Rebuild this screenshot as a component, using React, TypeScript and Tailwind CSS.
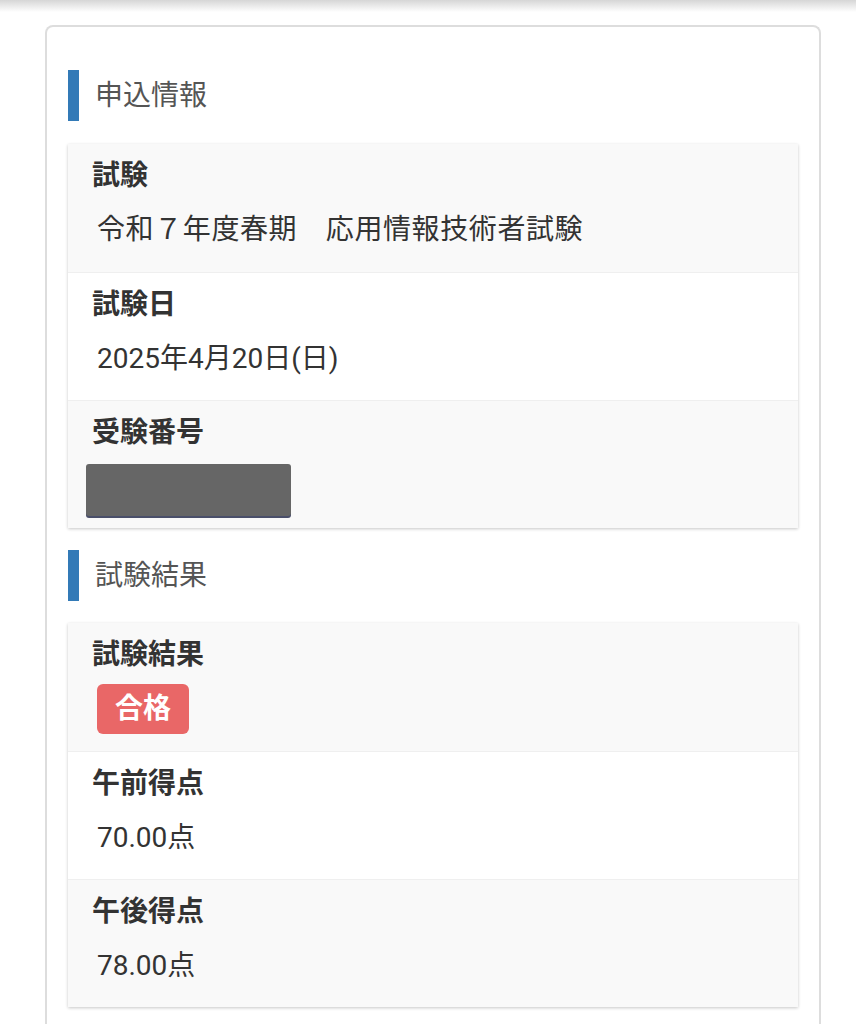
import type { ReactNode } from 'react';

interface FieldRow {
  label: string;
  value: ReactNode;
}

const applicationRows: FieldRow[] = [
  { label: '試験', value: <p className="pl-[5px] tracking-[0.6px]">令和７年度春期　応用情報技術者試験</p> },
  { label: '試験日', value: <p className="pl-[5px]">2025年4月20日(日)</p> },
  {
    label: '受験番号',
    value: <div className="ml-[-6px] mt-[-5px] h-[52px] w-[205px] rounded-[3px] bg-[#666666] shadow-[0_2px_0_#4a4f6a]" />,
  },
];

const resultRows: FieldRow[] = [
  {
    label: '試験結果',
    value: (
      <span className="ml-[5px] mt-[-7px] inline-flex h-[50px] items-center rounded-[6px] bg-[#e96767] px-[18px] font-bold text-white">
        合格
      </span>
    ),
  },
  { label: '午前得点', value: <p className="pl-[5px]">70.00点</p> },
  { label: '午後得点', value: <p className="pl-[5px]">78.00点</p> },
];

const SectionTitle = ({ title }: { title: string }) => (
  <div className="flex h-[51px] items-center">
    <div className="h-full w-[11px] bg-[#337ab7]" />
    <h2 className="ml-4 text-[28px] leading-none text-[#555555]">{title}</h2>
  </div>
);

const InfoCard = ({ rows }: { rows: FieldRow[] }) => (
  <div className="bg-white shadow-[0_1px_3px_rgba(0,0,0,0.22)]">
    {rows.map((row, i) => (
      <div
        key={row.label}
        className={`flex h-[128px] flex-col px-6 pt-[14px] ${i % 2 === 0 ? 'bg-[#f9f9f9]' : 'bg-white'} ${
          i > 0 ? 'border-t border-[#efefef]' : ''
        }`}
      >
        <p className="text-[28px] leading-[36px] font-bold text-[#333333]">{row.label}</p>
        <div className="mt-[18px] flex text-[28px] leading-[36px] text-[#333333]">{row.value}</div>
      </div>
    ))}
  </div>
);

export default function App() {
  return (
    <div
      className="h-[1024px] overflow-hidden bg-white"
      style={{ fontFamily: 'Roboto, "Noto Sans CJK JP", sans-serif' }}
    >
      <div className="h-3 bg-gradient-to-b from-[#d6d6d6] to-white" />
      <div className="pl-[45px] pr-[35px] pt-[13px]">
        <div className="rounded-t-[8px] border-2 border-b-0 border-[#dddddd] px-[21px] pt-[43px] pb-10">
          <SectionTitle title="申込情報" />
          <div className="mt-[23px]">
            <InfoCard rows={applicationRows} />
          </div>
          <div className="mt-[22px]">
            <SectionTitle title="試験結果" />
          </div>
          <div className="mt-[22px]">
            <InfoCard rows={resultRows} />
          </div>
        </div>
      </div>
    </div>
  );
}
